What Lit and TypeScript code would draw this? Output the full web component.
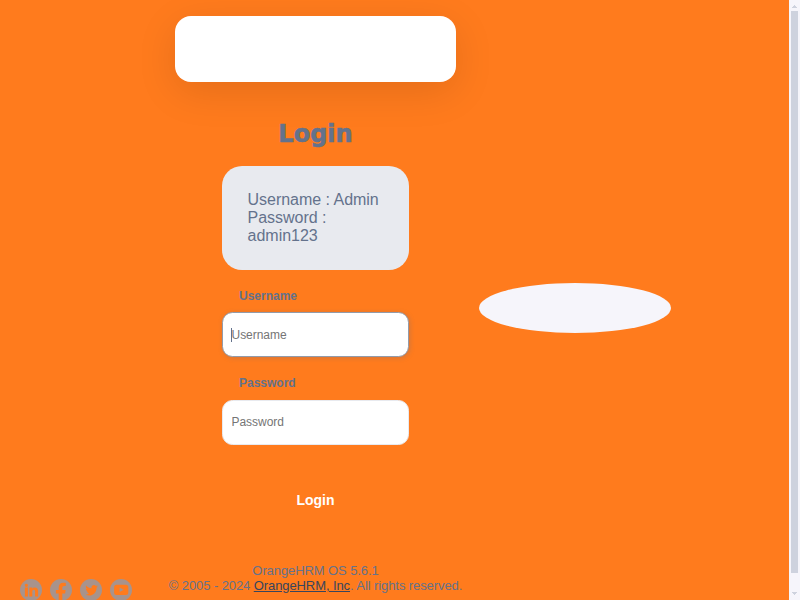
import { LitElement, html, css, svg } from "lit";
import { customElement } from "lit/decorators.js";

const icons = [
  svg`<path d="M5.900 9.600h3v8.900h-3zM7.400 5.700a1.650 1.650 0 1 1 0 3.300 1.650 1.650 0 0 1 0-3.300zM10.400 9.600h2.800v1.200c.6-.9 1.400-1.400 2.500-1.400 2.500 0 3.400 1.500 3.400 4v5.100h-3v-4.700c0-1.300-.3-2.100-1.300-2.100-1.100 0-1.500.9-1.500 2.100v4.700h-2.900z"/>`,
  svg`<path d="M9.700 24v-8.500H6.900v-3.400h2.800V9.500c0-3 1.800-4.700 4.500-4.700 1.300 0 2.600.2 2.600.2v3h-1.500c-1.500 0-2 .9-2 1.900v2.200h3.300l-.5 3.400h-2.800V24z"/>`,
  svg`<path transform="translate(2.200 1) scale(.88 .92)" d="M18.900 7.900c-.5.3-1.100.4-1.600.5.6-.4 1-1 1.200-1.600-.6.3-1.200.6-1.800.7a2.900 2.900 0 0 0-5 2.600c-2.400-.1-4.500-1.300-6-3.100-.7 1.400-.4 3 .9 3.900-.5 0-.9-.1-1.300-.4 0 1.400 1 2.600 2.300 2.900-.4.1-.9.1-1.300 0 .4 1.200 1.400 2 2.700 2A5.800 5.800 0 0 1 4.800 16.700c5 3.200 12.700.5 12.700-7.400.5-.4 1-.8 1.400-1.400z"/>`,
  svg`<path fill-rule="evenodd" d="M7.600 6.700h9.200q2.500 0 2.500 2.500v5.200q0 2.500-2.500 2.500H7.600q-2.500 0-2.500-2.500V9.200q0-2.500 2.500-2.500zM10.600 9.500v4.600l4.100-2.300z"/>`,
];

@customElement("app-root")
export class AppRoot extends LitElement {
  static styles = css`
    :host {
      display: flex;
      width: 800px;
      height: 600px;
      overflow: hidden;
      font-family: "Liberation Sans", sans-serif;
      color: #64728c;
    }
    * { box-sizing: border-box; }
    .page {
      width: 789px;
      height: 600px;
      background: #ff7b1d;
      display: grid;
      grid-template-columns: 152px 327px 192px;
      grid-template-rows: 600px;
      overflow: hidden;
    }
    .social {
      display: flex;
      gap: 6px;
      padding: 578px 0 0 19px;
    }
    .social svg { display: block; flex: none; width: 24px; height: 24px; }
    .disc { fill: #a8938c; }
    .glyph { fill: #ff7b1d; }
    .login {
      display: flex;
      flex-direction: column;
      align-items: center;
      padding-top: 16px;
    }
    .logo {
      flex: none;
      width: 281px;
      height: 66px;
      border-radius: 16px;
      background: #fff;
      box-shadow: 0 10px 40px rgba(0, 0, 0, 0.11);
    }
    h5 {
      margin: 35px 0 0;
      height: 33px;
      font: bold 24px/34px "DejaVu Sans", sans-serif;
      -webkit-text-stroke: 0.6px #64728c;
    }
    .hint {
      width: 187px;
      height: 104px;
      margin-top: 16px;
      padding: 25px 25.600px;
      border-radius: 20px;
      background: #e8eaef;
      font-size: 16px;
      line-height: 18px;
      letter-spacing: -0.03px;
    }
    .hint p { margin: 0; }
    form { width: 187px; display: flex; flex-direction: column; }
    label {
      margin: 18px 0 0 17px;
      height: 16px;
      font: bold 12px/16px "Liberation Sans", sans-serif;
    }
    input {
      width: 187px;
      height: 45px;
      margin: 8px 0 0;
      padding: 0 8.500px;
      border: 1px solid #e8eaef;
      border-radius: 10.400px;
      outline: none;
      background: #fff;
      color: #64728c;
      font: 12px "Liberation Sans", sans-serif;
      letter-spacing: -0.03px;
    }
    input::placeholder { color: #757575; opacity: 1; }
    .field { position: relative; display: flex; }
    .field.last input { margin-top: 9px; padding-bottom: 2px; }
    .field.active input { border-color: #929baa; box-shadow: 1px 1px 5px rgba(100, 114, 140, 0.3); }
    .field.active::before {
      content: "";
      position: absolute;
      left: 9px;
      top: 24px;
      height: 14px;
      width: 1px;
      background: #64728c;
    }
    button {
      height: 40px;
      margin: 35px 0 0;
      padding: 0;
      border: 0;
      background: #ff7b1d;
      color: #fff;
      font: bold 14px "Liberation Sans", sans-serif;
    }
    footer {
      margin-top: 43px;
      font-size: 13px;
      line-height: 15px;
      letter-spacing: -0.09px;
      text-align: center;
      white-space: nowrap;
    }
    footer p { margin: 0; }
    a { color: #38455d; text-decoration: underline; }
    .brand { align-self: start; margin-top: 283px; width: 192px; height: 50px; border-radius: 50%; background: #f6f5fb; }
    .scroll {
      width: 11px;
      height: 600px;
      background: #f6f5fb;
      display: flex;
      flex-direction: column;
      align-items: center;
    }
    .scroll svg { display: block; flex: none; width: 7px; height: 11px; fill: #ced2de; }
    .thumb { width: 7px; height: 562px; background: #ced2de; }
    .scroll .down { margin-top: 15px; }
  `;

  render() {
    return html`
      <main class="page">
        <div class="social">
          ${icons.map((icon) => html`<svg viewBox="0 0 24 24"><circle class="disc" cx="12" cy="12" r="11"></circle><g class="glyph">${icon}</g></svg>`)}
        </div>
        <section class="login">
          <div class="logo"></div>
          <h5>Login</h5>
          <div class="hint"><p>Username : Admin</p><p>Password : admin123</p></div>
          <form>
            <label for="user">Username</label>
            <div class="field active"><input id="user" placeholder="Username" /></div>
            <label for="pass">Password</label>
            <div class="field last"><input id="pass" type="password" placeholder="Password" /></div>
            <button type="button">Login</button>
          </form>
          <footer>
            <p>OrangeHRM OS 5.6.1</p>
            <p>© 2005 - 2024 <a href="#">OrangeHRM, Inc</a>. All rights reserved.</p>
          </footer>
        </section>
        <div class="brand"></div>
      </main>
      <div class="scroll">
        <svg viewBox="0 0 7 11" shape-rendering="crispEdges"><path d="M3 5h1v1h1v1h1v1H1V7h1V6h1z"/></svg>
        <div class="thumb"></div>
        <svg class="down" viewBox="0 0 7 11" shape-rendering="crispEdges"><path d="M1 4h5v1H5v1H4v1H3V6H2V5H1z"/></svg>
      </div>
    `;
  }
}
